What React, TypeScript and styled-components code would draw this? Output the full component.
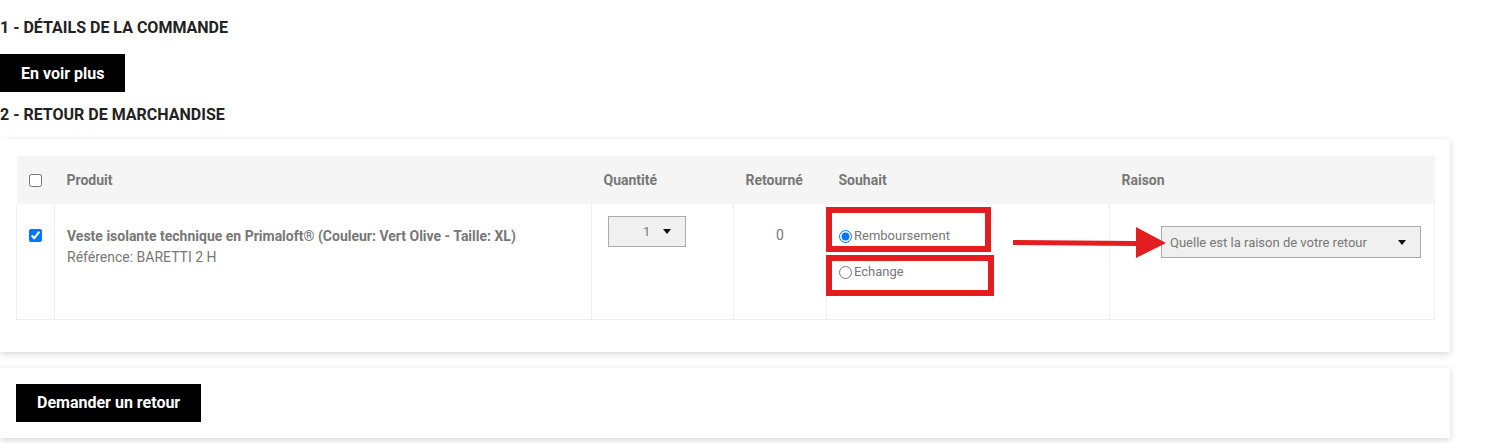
import React, { FC } from 'react';
import styled, { createGlobalStyle } from 'styled-components';

const GlobalStyle = createGlobalStyle`
  body {
    margin: 0;
    background: #fff;
    font-family: Roboto, "Liberation Sans", sans-serif;
  }
`;

const Page = styled.div`
  width: 1450px;
  padding-bottom: 6px;
`;

const SectionTitle = styled.h2`
  margin: ${p => p.$top}px 0 0 0;
  font-size: 16px;
  line-height: 20px;
  font-weight: 700;
  color: #222;
  text-transform: uppercase;
`;

const BlackButton = styled.button`
  display: block;
  height: 38px;
  padding: 0 21px;
  margin-top: ${p => p.$top || 0}px;
  border: 0;
  border-radius: 0;
  background: #000;
  color: #fff;
  font-family: Roboto, "Liberation Sans", sans-serif;
  font-size: 16px;
  font-weight: 700;
  cursor: pointer;
`;

const Panel = styled.div`
  margin-top: ${p => p.$top}px;
  background: #fff;
  box-shadow: 0 2px 7px rgba(0, 0, 0, 0.16);
  padding: ${p => p.$pad};
`;

const TableWrap = styled.div`
  position: relative;
`;

const Table = styled.table`
  width: 1418px;
  border-collapse: collapse;
  table-layout: fixed;
  font-size: 14px;
  color: #777;
`;

const HeadCell = styled.th`
  height: 48px;
  padding: 0 12px;
  background: #f5f5f5;
  text-align: left;
  font-weight: 700;
  font-size: 14px;
  color: #777;
`;

const Cell = styled.td`
  height: 115px;
  box-sizing: border-box;
  padding: ${p => p.$pad || '0 12px'};
  border: 1px solid #efefef;
  border-top: 0;
  vertical-align: top;
  text-align: ${p => p.$align || 'left'};
`;

const Check = styled.input`
  width: 13px;
  height: 13px;
  margin: 0;
  display: block;
`;

const ProductName = styled.div`
  font-weight: 700;
  line-height: 20px;
`;

const ProductRef = styled.div`
  line-height: 20px;
  margin-top: 1px;
`;

const SelectBox = styled.div`
  display: flex;
  align-items: center;
  justify-content: space-between;
  box-sizing: border-box;
  width: ${p => p.$w}px;
  height: ${p => p.$h}px;
  padding: 0 ${p => p.$padR}px 0 ${p => p.$padL}px;
  background: #f0f0f0;
  border: 1px solid #aaa;
  font-size: 13px;
  color: #777;
  gap: 12px;
`;

const Caret = styled.span`
  width: 0;
  height: 0;
  border-left: 4px solid transparent;
  border-right: 4px solid transparent;
  border-top: 5px solid #111;
`;

const RadioList = styled.div`
  display: flex;
  flex-direction: column;
  gap: 20px;
`;

const RadioLabel = styled.label`
  display: flex;
  align-items: center;
  gap: 2px;
  font-size: 13px;
  color: #777;
  line-height: 16px;
`;

const Radio = styled.input`
  width: 13px;
  height: 13px;
  margin: 0;
`;

const MarkBox = styled.div`
  position: absolute;
  left: ${p => p.$x}px;
  top: ${p => p.$y}px;
  width: ${p => p.$w}px;
  height: ${p => p.$h}px;
  box-sizing: border-box;
  border: 6px solid #e41e20;
  pointer-events: none;
`;

const Arrow = styled.svg`
  position: absolute;
  left: 997px;
  top: 71px;
  pointer-events: none;
`;

const App: FC = () => {
  return (
    <Page>
      <GlobalStyle />
      <SectionTitle $top={18}>1 - Détails de la commande</SectionTitle>
      <BlackButton $top={16}>En voir plus</BlackButton>
      <SectionTitle $top={13}>2 - Retour de marchandise</SectionTitle>
      <Panel $top={14} $pad="17px 16px 32px 16px">
        <TableWrap>
          <Table>
            <colgroup>
              <col style={{ width: 38 }} />
              <col style={{ width: 537 }} />
              <col style={{ width: 142 }} />
              <col style={{ width: 93 }} />
              <col style={{ width: 283 }} />
              <col style={{ width: 325 }} />
            </colgroup>
            <thead>
              <tr>
                <HeadCell><Check type="checkbox" /></HeadCell>
                <HeadCell>Produit</HeadCell>
                <HeadCell>Quantité</HeadCell>
                <HeadCell>Retourné</HeadCell>
                <HeadCell>Souhait</HeadCell>
                <HeadCell>Raison</HeadCell>
              </tr>
            </thead>
            <tbody>
              <tr>
                <Cell $pad="25px 12px 0 12px"><Check type="checkbox" defaultChecked /></Cell>
                <Cell $pad="22px 12px 0 12px">
                  <ProductName>Veste isolante technique en Primaloft® (Couleur: Vert Olive - Taille: XL)</ProductName>
                  <ProductRef>Référence: BARETTI 2 H</ProductRef>
                </Cell>
                <Cell $pad="12px 16px 0 16px">
                  <SelectBox $w={78} $h={31} $padL={34} $padR={14}>
                    <span>1</span>
                    <Caret />
                  </SelectBox>
                </Cell>
                <Cell $align="center" $pad="23px 12px 0 12px">0</Cell>
                <Cell $pad="24px 12px 0 12px">
                  <RadioList>
                    <RadioLabel><Radio type="radio" name="souhait" defaultChecked />Remboursement</RadioLabel>
                    <RadioLabel><Radio type="radio" name="souhait" />Echange</RadioLabel>
                  </RadioList>
                </Cell>
                <Cell $pad="22px 12px 0 51px">
                  <SelectBox $w={260} $h={32} $padL={8} $padR={14}>
                    <span>Quelle est la raison de votre retour</span>
                    <Caret />
                  </SelectBox>
                </Cell>
              </tr>
            </tbody>
          </Table>
          <MarkBox $x={810} $y={51} $w={165} $h={45} />
          <MarkBox $x={810} $y={99} $w={168} $h={41} />
          <Arrow width="155" height="32" viewBox="0 0 155 32">
            <polygon points="0,13 123,14 123,0 153,16 123,31 123,19 0,18" fill="#e41e20" />
          </Arrow>
        </TableWrap>
      </Panel>
      <Panel $top={16} $pad="16px 16px 16px 16px">
        <BlackButton>Demander un retour</BlackButton>
      </Panel>
    </Page>
  );
};

export default App;
